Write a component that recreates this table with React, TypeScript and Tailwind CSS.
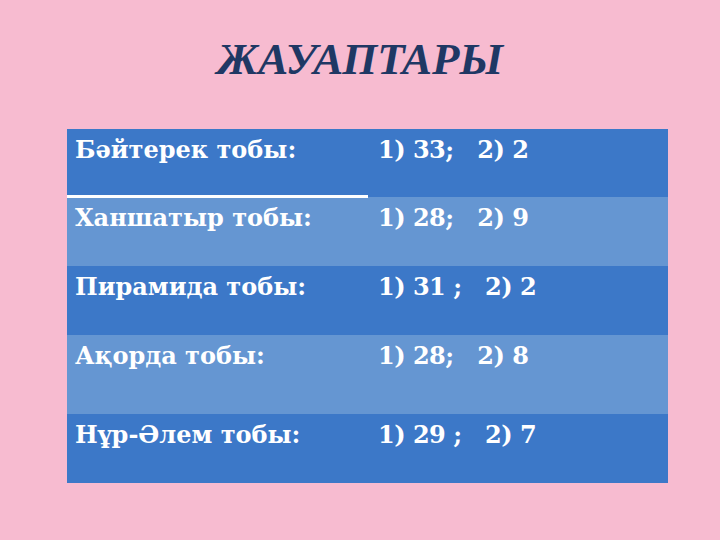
const rows = [
  { name: "Бәйтерек тобы:", answer: "1) 33;\u00a0\u00a0 2) 2", light: false, h: "h-[68px]" },
  { name: "Ханшатыр тобы:", answer: "1) 28;\u00a0\u00a0 2) 9", light: true, h: "h-[69px]" },
  { name: "Пирамида тобы:", answer: "1) 31 ;\u00a0\u00a0 2) 2", light: false, h: "h-[69px]" },
  { name: "Ақорда тобы:", answer: "1) 28;\u00a0\u00a0 2) 8", light: true, h: "h-[79px]" },
  { name: "Нұр-Әлем тобы:", answer: "1) 29 ;\u00a0\u00a0 2) 7", light: false, h: "h-[69px]" },
]

export default function App() {
  return (
    <div className="w-[720px] h-[540px] bg-[#f7bbd0] flex flex-col font-['Liberation_Serif',serif]">
      <h1 className="mt-[34px] self-center text-[45px] leading-[50px] font-bold italic text-[#1f3864]">
        ЖАУАПТАРЫ
      </h1>
      <div className="mt-[45px] ml-[67px] w-[601px] flex flex-col text-white text-[24px] leading-[30px] font-bold font-['DejaVu_Serif',serif]">
        {rows.map((r, i) => (
          <div
            key={r.name}
            className={`flex ${r.h} ${r.light ? "bg-[#6596d2]" : "bg-[#3c78c8]"}`}
          >
            <div className="relative w-[301px] pl-[8px] pt-[6px]">
              {r.name}
              {i === 0 && (
                <div className="absolute left-0 right-0 bottom-[-1px] h-[3px] bg-white" />
              )}
            </div>
            <div className="flex-1 pl-[10px] pt-[6px] tracking-[-0.5px]">{r.answer}</div>
          </div>
        ))}
      </div>
    </div>
  )
}
